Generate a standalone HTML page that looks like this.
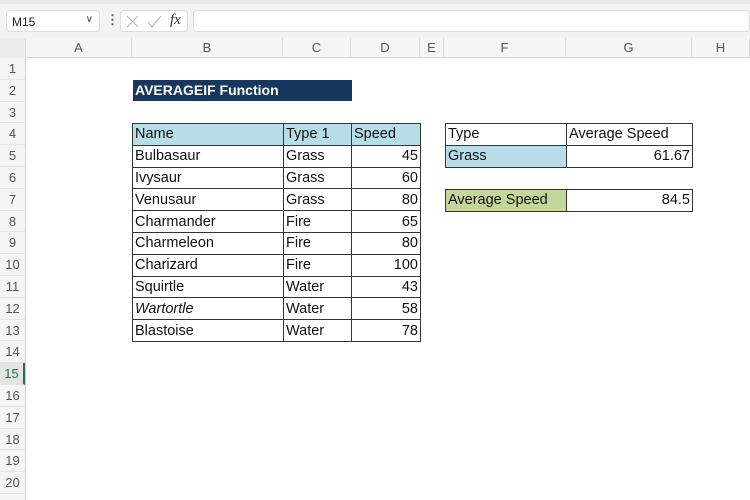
<!DOCTYPE html>
<html><head><meta charset="utf-8"><style>
*{margin:0;padding:0;box-sizing:border-box}
body{width:750px;height:500px;overflow:hidden;background:#fff;font-family:"Liberation Sans",sans-serif;position:relative}
.a{position:absolute}
.top{left:0;top:0;width:750px;height:38px;background:#f3f3f3}
.top .line{left:0;top:0;width:750px;height:4px;background:#e8e8e8}
.nb{left:6px;top:10px;width:94px;height:22px;background:#fff;border:1px solid #ddd;border-radius:4px;font-size:12px;color:#222;padding:4px 0 0 5px}
.fxb{left:120px;top:10px;width:68px;height:22px;background:#fff;border:1px solid #ddd;border-radius:4px}
.fb{left:193px;top:10px;width:557px;height:22px;background:#fff;border:1px solid #ddd;border-radius:4px}
.ch{left:0;top:38px;width:750px;height:20px;background:#f5f5f5;border-bottom:1px solid #d6d6d6}
.ch div{position:absolute;top:0;height:20px;line-height:20px;text-align:center;font-size:13px;color:#555;border-right:1px solid #dcdcdc}
.rh{left:0;top:58px;width:26px;height:442px;background:#f5f5f5;border-right:1px solid #d0d0d0;overflow:hidden}
.rh div{position:absolute;left:0;width:25px;height:21.8px;line-height:22px;text-align:center;font-size:13px;color:#555;border-bottom:1px solid #e3e3e3}
table{position:absolute;border-collapse:collapse;table-layout:fixed;font-size:14.5px;color:#111}
td{border:1px solid #333;height:21.8px;padding:0 2px;white-space:nowrap;overflow:hidden;line-height:20px}
td.r{text-align:right}
.hd td{background:#b7dde8}
</style></head><body>
<div class="a top"><div class="a line"></div>
<div class="a nb">M15<span style="position:absolute;right:6px;top:3px;font-size:10px;color:#444">&#8744;</span></div>
<div class="a" style="left:106px;top:12px;font-size:13px;color:#555;font-weight:bold">&#8942;</div>
<div class="a fxb"><svg width="68" height="22" style="position:absolute;left:0;top:0"><path d="M6 5l11 11M17 5L6 16" stroke="#bbb" stroke-width="1.2" fill="none"/><path d="M27 11l4 5 9-11" stroke="#bbb" stroke-width="1.2" fill="none"/></svg><span style="position:absolute;left:49px;top:1px;font-family:'Liberation Serif',serif;font-style:italic;font-size:15px;color:#333">fx</span></div>
<div class="a fb"></div>
</div>
<div class="a ch">
<div style="left:0;width:26px;background:#ececec"></div>
<div style="left:26px;width:106px">A</div>
<div style="left:132px;width:151px">B</div>
<div style="left:283px;width:68px">C</div>
<div style="left:351px;width:69px">D</div>
<div style="left:420px;width:24px">E</div>
<div style="left:444px;width:122px">F</div>
<div style="left:566px;width:126px">G</div>
<div style="left:692px;width:58px">H</div>
</div>
<div class="a rh">
<div style="top:0">1</div><div style="top:21.8px">2</div><div style="top:43.6px">3</div><div style="top:65.4px">4</div><div style="top:87.2px">5</div><div style="top:109px">6</div><div style="top:130.8px">7</div><div style="top:152.6px">8</div><div style="top:174.4px">9</div><div style="top:196.2px">10</div><div style="top:218px">11</div><div style="top:239.8px">12</div><div style="top:261.6px">13</div><div style="top:283.4px">14</div><div style="top:305.2px;background:#e3e3e3;color:#217346;border-right:2px solid #217346">15</div><div style="top:327px">16</div><div style="top:348.8px">17</div><div style="top:370.6px">18</div><div style="top:392.4px">19</div><div style="top:414.2px">20</div>
</div>
<div class="a" style="left:133px;top:80px;width:219px;height:21px;background:#17375e;color:#fff;font-weight:bold;font-size:14px;line-height:21px;padding-left:2px">AVERAGEIF Function</div>
<table style="left:132px;top:123px;width:288px">
<colgroup><col style="width:151px"><col style="width:68px"><col style="width:69px"></colgroup>
<tr class="hd"><td>Name</td><td>Type 1</td><td>Speed</td></tr>
<tr><td>Bulbasaur</td><td>Grass</td><td class="r">45</td></tr>
<tr><td>Ivysaur</td><td>Grass</td><td class="r">60</td></tr>
<tr><td>Venusaur</td><td>Grass</td><td class="r">80</td></tr>
<tr><td>Charmander</td><td>Fire</td><td class="r">65</td></tr>
<tr><td>Charmeleon</td><td>Fire</td><td class="r">80</td></tr>
<tr><td>Charizard</td><td>Fire</td><td class="r">100</td></tr>
<tr><td>Squirtle</td><td>Water</td><td class="r">43</td></tr>
<tr><td><i>Wartortle</i></td><td>Water</td><td class="r">58</td></tr>
<tr><td>Blastoise</td><td>Water</td><td class="r">78</td></tr>
</table>
<table style="left:445px;top:123px;width:247px">
<colgroup><col style="width:121px"><col style="width:126px"></colgroup>
<tr><td>Type</td><td>Average Speed</td></tr>
<tr><td style="background:#b7dde8">Grass</td><td class="r">61.67</td></tr>
</table>
<table style="left:445px;top:189px;width:247px">
<colgroup><col style="width:121px"><col style="width:126px"></colgroup>
<tr><td style="background:#c4d79b">Average Speed</td><td class="r">84.5</td></tr>
</table>
</body></html>
